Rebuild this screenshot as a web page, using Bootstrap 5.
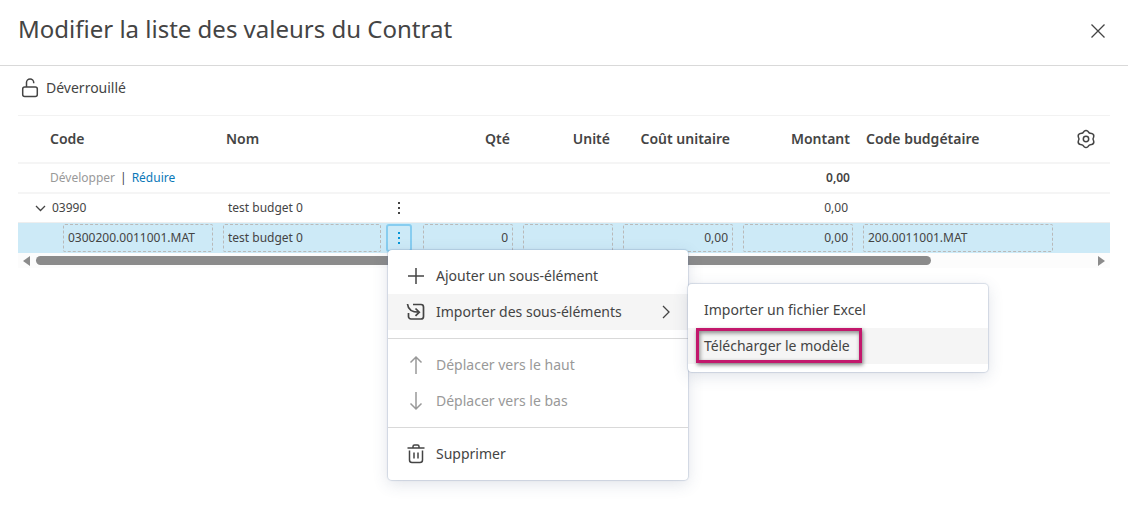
<!DOCTYPE html>
<html lang="fr">
<head>
<meta charset="utf-8">
<meta name="viewport" content="width=device-width, initial-scale=1">
<title>Modifier la liste des valeurs du Contrat</title>
<link rel="stylesheet" href="https://cdn.jsdelivr.net/npm/bootstrap@5.3.0/dist/css/bootstrap.min.css">
<style>
body{font-family:"Noto Sans","Open Sans",sans-serif;font-size:14px;line-height:20px;color:#444;background:#fff}
svg{display:block;fill:none;stroke:currentColor;stroke-width:1.5}
button{color:inherit}
.dlg-head{height:66px;padding:0 18px 4px;border-bottom:1px solid #d9d9d9}
.dlg-title{font-size:24px;line-height:32px;font-weight:400;margin:0 0 4px}
.icon-btn{display:block;border:0;background:none;padding:0}
.dlg-body{padding:10px 18px 0}
.lock-row{height:24px;margin-bottom:15px;padding-left:2px}
.grid-table{table-layout:fixed;width:100%;border-collapse:separate;border-spacing:0;font-size:12px}
.grid-table th,.grid-table td{padding:0 8px;vertical-align:middle;white-space:nowrap}
.grid-table th{height:49px;font-size:14px;font-weight:600;border-top:1px solid #f2f2f2;border-bottom:2px solid #f5f5f5}
.grid-table td{height:30px;border-bottom:2px solid #f5f5f5}
.grid-table .item-row td{height:29px;border-bottom:1px solid #eee}
.grid-table .row-on td{background:#cdeaf7;border-bottom:0;padding:0 5px}
.c-code{width:200px}.c-name{width:168px}.c-menu{width:32px}.c-num{width:100px}.c-amt{width:120px}.c-bud{width:200px}
.grid-table .lead-in{padding-left:32px}
.grid-table .row-on .sub-in{padding-left:45px}
.grid-table .tree-cell{padding-left:16px}
.grid-table .cell-end{padding-right:10px}
.grid-table .cell-start{padding-left:10px}
.cell-input{display:block;width:100%;height:28px;padding:0 4px 1px;border:1px dashed #b9b9b9;border-radius:2px;background:none;color:inherit}
.link-off{color:#999;text-decoration:none}
.link-on{color:#0b78b8;text-decoration:none}
.bar-sep{padding:0 5px}
.grid-table td.menu-cell,.grid-table .row-on td.menu-cell{padding:0}
.kebab{display:flex;align-items:center;justify-content:center;width:26px;height:28px;border:0;border-radius:3px;background:none;padding:0}
.kebab svg{fill:currentColor;stroke:none}
.kebab-on{border:2px solid #87cdf0;color:#0696d7}
.scroll-row{height:15px;background:#fcfcfc;padding:0 4px}
.scroll-row svg{fill:#8b8b8b;stroke:none}
.thumb-bar{height:9px;border-radius:5px;background:#8b8b8b}
.pop{position:absolute;width:300px;padding:8px 0;background:#fff;border-radius:4px;box-shadow:0 0 1px 1px rgba(90,120,160,.22),0 4px 16px rgba(60,80,120,.16);font-size:14px;z-index:5}
.pop-main{top:26px;left:2px}
.pop-sub{top:-10px;left:100%}
.pop-item{display:flex;align-items:center;gap:8px;width:100%;height:36px;padding:0 16px;border:0;background:none;text-align:left}
.pop-item:disabled{color:#999}
.pop-item.current{background:#f5f5f5}
.pop-line{height:1px;margin:8px 0;background:#d9d9d9}
.call-out{position:absolute;left:8px;top:0;width:166px;height:35px;border:3px solid #c2186c;box-shadow:1px 2px 4px rgba(0,0,0,.5),inset 1px 2px 4px rgba(0,0,0,.45);pointer-events:none}
</style>
</head>
<body class="min-vh-100">
<header class="dlg-head d-flex align-items-center justify-content-between">
  <h1 class="dlg-title">Modifier la liste des valeurs du Contrat</h1>
  <button class="icon-btn" type="button" aria-label="Fermer"><svg width="24" height="24" viewBox="0 0 24 24"><path d="M5.500 5.500l13 13M18.500 5.500l-13 13" stroke-width="1.300"/></svg></button>
</header>
<main class="dlg-body">
  <div class="lock-row d-flex align-items-center gap-1">
    <svg width="22" height="24" viewBox="0 0 22 24"><rect x="2.700" y="11" width="14.600" height="9.500" rx="2"/><path d="M6.500 11V6.500a3.600 3.600 0 0 1 7.200 0v.8"/></svg>
    <span>Déverrouillé</span>
  </div>
  <table class="grid-table">
    <colgroup><col class="c-code"><col class="c-name"><col class="c-menu"><col class="c-num"><col class="c-num"><col class="c-amt"><col class="c-amt"><col class="c-bud"><col></colgroup>
    <thead>
      <tr>
        <th class="lead-in" scope="col">Code</th><th scope="col">Nom</th><th></th>
        <th class="text-end" scope="col">Qté</th><th class="text-end" scope="col">Unité</th>
        <th class="text-end" scope="col">Coût unitaire</th><th class="text-end" scope="col">Montant</th>
        <th scope="col">Code budgétaire</th>
        <th><button class="icon-btn ms-2" type="button" aria-label="Paramètres"><svg width="24" height="24" viewBox="0 0 24 24"><circle cx="12" cy="12" r="2.700"/><path stroke-linejoin="round" d="M10.100 4.300Q12 2.600 13.900 4.300Q15.100 6.600 17.700 6.400Q20.300 7.200 19.700 9.800Q18.200 12 19.700 14.200Q20.300 16.800 17.700 17.600Q15.100 17.400 13.900 19.700Q12 21.400 10.100 19.700Q8.900 17.400 6.300 17.600Q3.700 16.800 4.300 14.200Q5.800 12 4.300 9.800Q3.700 7.200 6.300 6.400Q8.900 6.600 10.100 4.300z"/></svg></button></th>
      </tr>
    </thead>
    <tbody>
      <tr>
        <td class="lead-in"><a class="link-off" href="#">Développer</a><span class="bar-sep">|</span><a class="link-on" href="#">Réduire</a></td>
        <td></td><td></td><td></td><td></td><td></td><td class="text-end fw-semibold">0,00</td><td></td><td></td>
      </tr>
      <tr class="item-row">
        <td class="tree-cell"><div class="d-flex align-items-center gap-1"><button class="icon-btn" type="button" aria-label="Réduire la ligne"><svg width="14" height="14" viewBox="0 0 14 14"><path d="M2 5l4.500 4.500L11 5" stroke-width="1.300"/></svg></button>03990</div></td>
        <td class="cell-start">test budget 0</td>
        <td class="menu-cell"><button class="kebab" type="button" aria-label="Actions"><svg width="4" height="14" viewBox="0 0 4 14"><path d="M1 1h2v2H1zM1 6h2v2H1zM1 11h2v2H1z"/></svg></button></td>
        <td></td><td></td><td></td><td class="text-end cell-end">0,00</td><td></td><td></td>
      </tr>
      <tr class="row-on">
        <td class="sub-in"><input class="cell-input" aria-label="Code" value="0300200.0011001.MAT"></td>
        <td><input class="cell-input" aria-label="Nom" value="test budget 0"></td>
        <td class="menu-cell"><div class="position-relative">
          <button class="kebab kebab-on" type="button" aria-label="Actions" aria-expanded="true"><svg width="4" height="14" viewBox="0 0 4 14"><path d="M1 1h2v2H1zM1 6h2v2H1zM1 11h2v2H1z"/></svg></button>
          <div class="pop pop-main" role="menu">
            <button class="pop-item" type="button" role="menuitem"><svg width="24" height="24" viewBox="0 0 24 24"><path d="M12 4v16M4 12h16"/></svg>Ajouter un sous-élément</button>
            <div class="position-relative">
              <button class="pop-item current" type="button" role="menuitem"><svg width="24" height="24" viewBox="0 0 24 24"><path d="M3.500 4C4 9 7 12.200 15 12.200M11.500 8.500l3.800 3.700-3.800 3.700M9 4.500h8a2.500 2.500 0 0 1 2.500 2.500v9.500a2.500 2.500 0 0 1-2.500 2.500H7A2.500 2.500 0 0 1 4.500 16.500V13" stroke-width="1.700"/></svg><span class="flex-grow-1">Importer des sous-éléments</span><svg width="12" height="16" viewBox="0 0 12 16"><path d="M3 2l6 6-6 6" stroke-width="1.300"/></svg></button>
              <div class="pop pop-sub" role="menu">
                <button class="pop-item" type="button" role="menuitem">Importer un fichier Excel</button>
                <div class="position-relative">
                  <button class="pop-item current" type="button" role="menuitem">Télécharger le modèle</button>
                  <span class="call-out"></span>
                </div>
              </div>
            </div>
            <div class="pop-line"></div>
            <button class="pop-item" type="button" role="menuitem" disabled><svg width="24" height="24" viewBox="0 0 24 24"><path d="M12 21V4M6.500 9.500L12 4l5.500 5.500"/></svg>Déplacer vers le haut</button>
            <button class="pop-item" type="button" role="menuitem" disabled><svg width="24" height="24" viewBox="0 0 24 24"><path d="M12 3v17M6.500 14.500L12 20l5.500-5.500"/></svg>Déplacer vers le bas</button>
            <div class="pop-line"></div>
            <button class="pop-item" type="button" role="menuitem"><svg width="24" height="24" viewBox="0 0 24 24"><path d="M3.500 6h17M9 6V4.500Q9 3 10.500 3h3Q15 3 15 4.500V6M5.500 8.500V18a2.500 2.500 0 0 0 2.500 2.500h8a2.500 2.500 0 0 0 2.500-2.500V8.500M10 10.500v6M14 10.500v6"/></svg>Supprimer</button>
          </div>
        </div></td>
        <td><input class="cell-input text-end" aria-label="Qté" value="0"></td>
        <td><input class="cell-input text-end" aria-label="Unité" value=""></td>
        <td><input class="cell-input text-end" aria-label="Coût unitaire" value="0,00"></td>
        <td><input class="cell-input text-end" aria-label="Montant" value="0,00"></td>
        <td><input class="cell-input" aria-label="Code budgétaire" value="200.0011001.MAT"></td>
        <td></td>
      </tr>
    </tbody>
  </table>
  <div class="scroll-row d-flex align-items-center">
    <svg width="14" height="10" viewBox="0 0 14 10"><path d="M8 0v10L1 5z"/></svg>
    <div class="flex-grow-1"><div class="thumb-bar" style="width:84.75%"></div></div>
    <svg width="14" height="10" viewBox="0 0 14 10"><path d="M6 0v10l7-5z"/></svg>
  </div>
</main>
<script src="https://cdn.jsdelivr.net/npm/bootstrap@5.3.0/dist/js/bootstrap.bundle.min.js"></script>
</body>
</html>
